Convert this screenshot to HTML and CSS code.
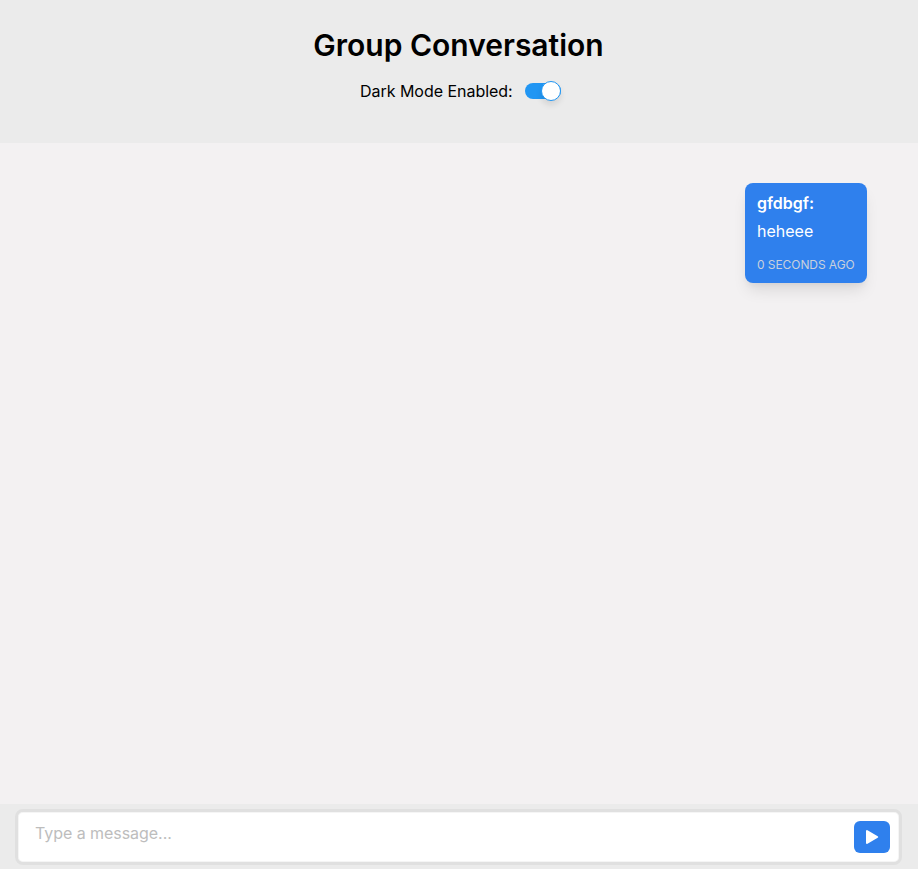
FILE: index.html
```html
<!DOCTYPE html>
<html lang="en">
<head>
<meta charset="utf-8">
<title>Group Conversation</title>
<link rel="stylesheet" href="styles.css">
</head>
<body>
<header class="header">
<h1 class="title">Group Conversation</h1>
<div class="mode"><span class="label">Dark Mode Enabled:</span><span class="switch"><span class="knob"></span></span></div>
</header>
<main class="messages">
<article class="message">
<div class="author">gfdbgf:</div>
<div class="text">heheee</div>
<div class="time">0 SECONDS AGO</div>
</article>
</main>
<footer class="footer">
<div class="composer">
<span class="placeholder">Type a message...</span>
<button class="send" aria-label="Send"><svg width="16" height="16" viewBox="0 0 16 16"><path d="M3 2.1v11.8L13.2 8z" fill="#fff" stroke="#fff" stroke-width="2" stroke-linejoin="round"/></svg></button>
</div>
</footer>
</body>
</html>
```
FILE: styles.css
```css
* { box-sizing: border-box; }
body { margin: 0; height: 869px; display: flex; flex-direction: column; background: #f3f1f2; font: 400 16px/24px Inter, sans-serif; color: #000; overflow: hidden; }
.header { height: 143px; flex: none; background: #ebebeb; padding-top: 25px; text-align: center; }
.title { margin: 0 1px 0 0; font-size: 30px; line-height: 40px; font-weight: 600; }
.mode { display: flex; justify-content: center; align-items: center; gap: 12px; margin-top: 14px; padding-left: 3px; }
.label { width: 153px; white-space: nowrap; text-align: left; letter-spacing: -0.03px; }
.switch { width: 36px; height: 16px; border-radius: 8px; background: #2196f3; display: flex; align-items: center; justify-content: flex-end; }
.knob { width: 20px; height: 20px; flex: none; border-radius: 50%; background: #fff; border: 1px solid #2196f3; box-shadow: 0 4px 6px rgba(0,0,0,.1); }
.messages { flex: 1; display: flex; justify-content: flex-end; align-items: flex-start; padding: 40px 51px; }
.message { width: 122px; height: 100px; border-radius: 8px; padding: 8px 12px; background: #2f80ed; color: #fff; box-shadow: 0 10px 15px -3px rgba(0,0,0,.1), 0 4px 6px -2px rgba(0,0,0,.05); }
.author { font-weight: 600; }
.text { margin-top: 4px; }
.time { margin-top: 12px; font-size: 12px; line-height: 20px; color: #c8d0dc; white-space: nowrap; letter-spacing: -0.07px; }
.footer { height: 65px; flex: none; background: #ebebeb; padding: 5px 16px 4px 15px; }
.composer { height: 56px; border: 3px solid #e0e0e0; border-radius: 8px; background: #fff; box-shadow: inset 0 0 0 1px #f5f5f5; display: flex; justify-content: space-between; align-items: flex-start; padding: 9px 9px 0 17px; }
.placeholder { color: #bdbdbd; letter-spacing: -0.05px; }
.send { width: 36px; height: 32px; border: 0; padding: 0; border-radius: 6px; background: #2f80ed; display: grid; place-items: center; }
```
